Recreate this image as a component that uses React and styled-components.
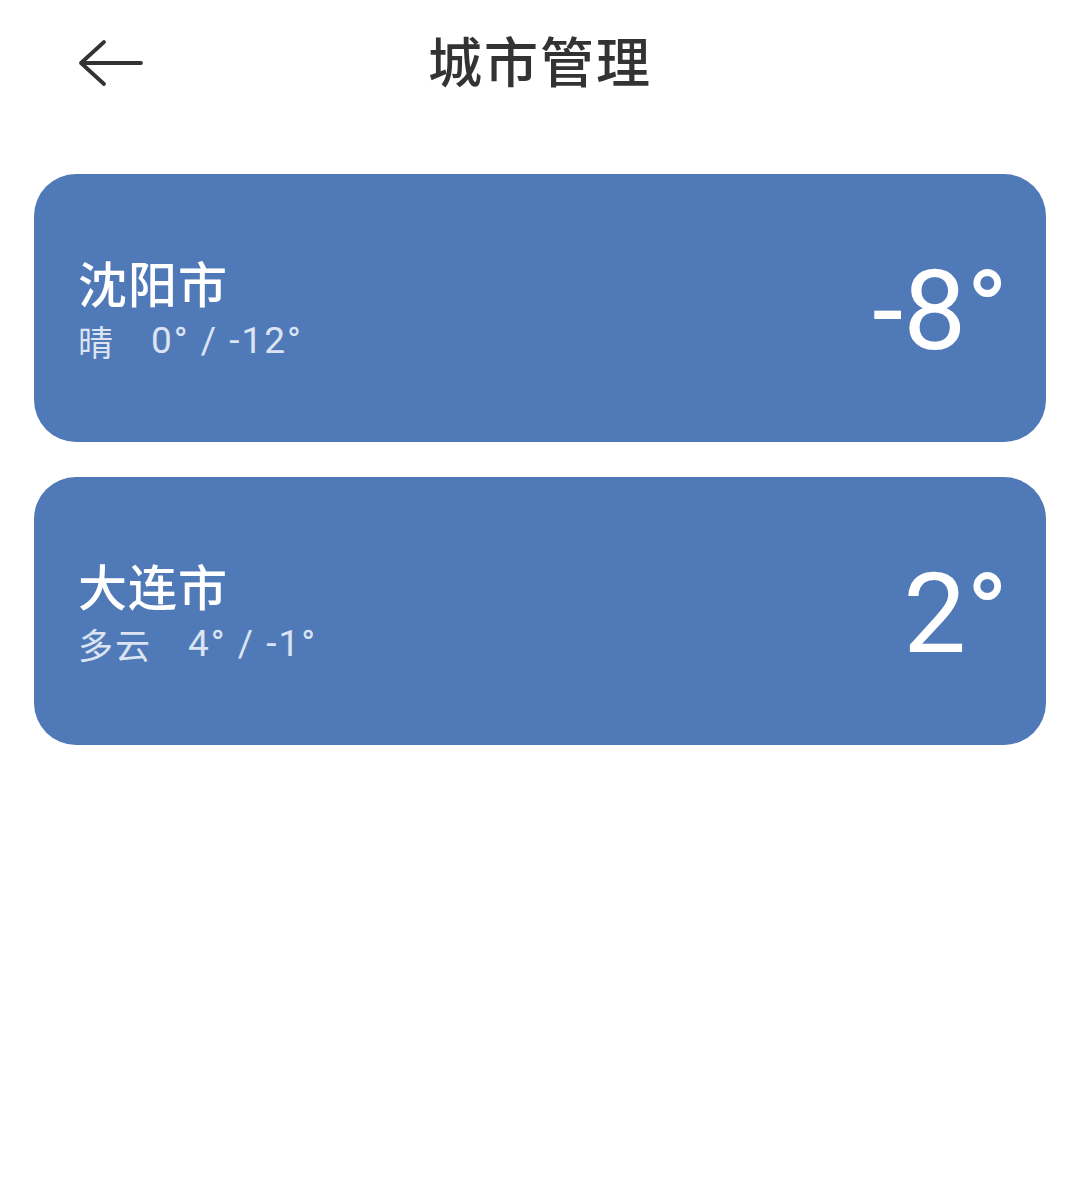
import React from "react";
import styled, { createGlobalStyle } from "styled-components";

const GlobalStyle = createGlobalStyle`
  body {
    margin: 0;
    background: #fff;
    font-family: Roboto, "Noto Sans CJK SC", sans-serif;
  }
`;

const Page = styled.div`
  width: 1080px;
  min-height: 1181px;
  background: #fff;
`;

const Header = styled.header`
  position: relative;
  height: 126px;
  display: flex;
  align-items: center;
  justify-content: center;
`;

const BackButton = styled.button`
  position: absolute;
  left: 77px;
  top: 37px;
  width: 72px;
  height: 52px;
  padding: 0;
  border: none;
  background: transparent;
  display: flex;
  align-items: center;
  justify-content: flex-start;
  cursor: pointer;
`;

const Title = styled.h1`
  margin: 0;
  font-family: "Noto Sans CJK SC", sans-serif;
  font-size: 54px;
  font-weight: 500;
  color: #333;
  letter-spacing: 2px;
  line-height: 1;
  transform: translateY(-3px);
`;

const List = styled.div`
  display: flex;
  flex-direction: column;
  gap: 35px;
  padding: 48px 34px 0;
`;

const Card = styled.div`
  height: 268px;
  border-radius: 42px;
  background: #5079b8;
  display: flex;
  align-items: center;
  justify-content: space-between;
  padding: 0 38px 0 44px;
  box-sizing: border-box;
  color: #fff;
`;

const Info = styled.div`
  display: flex;
  flex-direction: column;
  gap: 8px;
`;

const CityName = styled.div`
  font-family: "Noto Sans CJK SC", sans-serif;
  font-size: 49px;
  font-weight: 500;
  line-height: 58px;
  letter-spacing: 1px;
`;

const Detail = styled.div`
  font-family: Roboto, "Noto Sans CJK SC", sans-serif;
  font-size: 37px;
  line-height: 44px;
  color: #dbe4f2;
  display: flex;
  gap: 36px;
`;

const Weather = styled.span`
  font-family: "Noto Sans CJK SC", sans-serif;
  font-size: 35px;
  letter-spacing: 2px;
`;

const Range = styled.span`
  letter-spacing: 2px;
`;

const Temp = styled.div`
  font-family: Roboto, sans-serif;
  font-size: 112px;
  font-weight: 400;
  line-height: 1;
  margin-top: 6px;
`;

const cities = [
  { name: "沈阳市", weather: "晴", range: "0° / -12°", temp: "-8°" },
  { name: "大连市", weather: "多云", range: "4° / -1°", temp: "2°" },
];

const BackArrow = () => (
  <svg width="66" height="52" viewBox="0 0 66 52" fill="none">
    <path
      d="M27 5 L4 26 L27 47 M4 26 H64"
      stroke="#333"
      strokeWidth="3.8"
      strokeLinecap="round"
      strokeLinejoin="round"
    />
  </svg>
);

export default function App() {
  return (
    <Page>
      <GlobalStyle />
      <Header>
        <BackButton aria-label="返回">
          <BackArrow />
        </BackButton>
        <Title>城市管理</Title>
      </Header>
      <List>
        {cities.map((c) => (
          <Card key={c.name}>
            <Info>
              <CityName>{c.name}</CityName>
              <Detail>
                <Weather>{c.weather}</Weather>
                <Range>{c.range}</Range>
              </Detail>
            </Info>
            <Temp>{c.temp}</Temp>
          </Card>
        ))}
      </List>
    </Page>
  );
}
